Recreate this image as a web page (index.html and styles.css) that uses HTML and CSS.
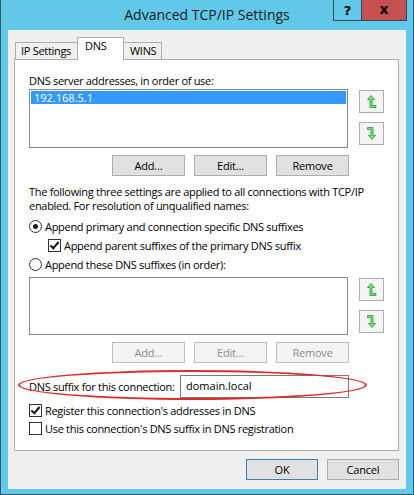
FILE: index.html
```html
<!DOCTYPE html>
<html lang="en">

<head>
    <meta charset="UTF-8">
    <meta name="viewport" content="width=device-width, initial-scale=1.0">
    <title>Advanced TCP/IP Settings</title>
    <link rel="stylesheet" href="styles.css">
</head>

<body>
    <div class="window">
        <div class="titlebar">
            <span class="title">Advanced TCP/IP Settings</span>
            <div class="caption-btns">
                <div class="cap help">?</div>
                <div class="cap close">x</div>
            </div>
        </div>

        <div class="client">
            <div class="tabs">
                <div class="tab first">IP Settings</div>
                <div class="tab active">DNS</div>
                <div class="tab">WINS</div>
            </div>

            <div class="panel">
                <div class="label">DNS server addresses, in order of use:</div>
                <div class="list-row">
                    <div class="listbox">
                        <div class="item selected">192.168.5.1</div>
                    </div>
                    <div class="arrows">
                        <div class="arrow-btn">
                            <svg width="10" height="14" viewBox="0 0 10 14">
                                <path d="M4 0.5 L0.5 4.5 L3 4.5 L3 12.5 L9 12.5 L9 10.5 L5 10.5 L5 4.5 L7.5 4.5 Z" fill="#7be07b" stroke="#3fae3f" stroke-width="1" />
                            </svg>
                        </div>
                        <div class="arrow-btn">
                            <svg width="10" height="14" viewBox="0 0 10 14">
                                <path d="M0.5 0.5 L6 0.5 L6 8.5 L8.5 8.5 L5 12.5 L1.5 8.5 L4 8.5 L4 2.5 L0.5 2.5 Z" fill="#7be07b" stroke="#3fae3f" stroke-width="1" />
                            </svg>
                        </div>
                    </div>
                </div>
                <div class="btn-row">
                    <button class="btn">Add...</button>
                    <button class="btn">Edit...</button>
                    <button class="btn">Remove</button>
                </div>

                <p class="info">The following three settings are applied to all connections with TCP/IP<br>enabled. For resolution of unqualified names:</p>

                <div class="option"><span class="radio checked"></span>Append primary and connection specific DNS suffixes</div>
                <div class="option sub"><span class="check checked"></span>Append parent suffixes of the primary DNS suffix</div>
                <div class="option"><span class="radio"></span>Append these DNS suffixes (in order):</div>

                <div class="list-row second">
                    <div class="listbox"></div>
                    <div class="arrows">
                        <div class="arrow-btn">
                            <svg width="10" height="14" viewBox="0 0 10 14">
                                <path d="M4 0.5 L0.5 4.5 L3 4.5 L3 12.5 L9 12.5 L9 10.5 L5 10.5 L5 4.5 L7.5 4.5 Z" fill="#7be07b" stroke="#3fae3f" stroke-width="1" />
                            </svg>
                        </div>
                        <div class="arrow-btn">
                            <svg width="10" height="14" viewBox="0 0 10 14">
                                <path d="M0.5 0.5 L6 0.5 L6 8.5 L8.5 8.5 L5 12.5 L1.5 8.5 L4 8.5 L4 2.5 L0.5 2.5 Z" fill="#7be07b" stroke="#3fae3f" stroke-width="1" />
                            </svg>
                        </div>
                    </div>
                </div>
                <div class="btn-row">
                    <button class="btn" disabled>Add...</button>
                    <button class="btn" disabled>Edit...</button>
                    <button class="btn" disabled>Remove</button>
                </div>

                <div class="suffix-row">
                    <span class="suffix-label">DNS suffix for this connection:</span>
                    <div class="textbox">domain.local</div>
                    <div class="highlight"></div>
                </div>

                <div class="option reg"><span class="check checked"></span>Register this connection's addresses in DNS</div>
                <div class="option reg"><span class="check"></span>Use this connection's DNS suffix in DNS registration</div>
            </div>

            <div class="footer">
                <button class="btn default">OK</button>
                <button class="btn">Cancel</button>
            </div>
        </div>
    </div>
</body>

</html>
```

FILE: styles.css
```css
body {
    margin: 0;
    padding: 0;
    font-family: "Open Sans", "Noto Sans", sans-serif;
    font-size: 11px;
    letter-spacing: -0.3px;
    color: #000;
    background: #fff;
    white-space: nowrap;
}

.window {
    width: 414px;
    height: 495px;
    box-sizing: border-box;
    background: #62c8ea;
    border: 1px solid #2e5869;
    border-top: none;
    display: flex;
    flex-direction: column;
    position: relative;
}

.titlebar {
    height: 30px;
    display: flex;
    align-items: center;
    justify-content: center;
    position: relative;
}

.title {
    font-size: 14px;
    letter-spacing: 0;
    color: #1b1b1b;
    margin-top: -1px;
}

.caption-btns {
    position: absolute;
    top: 0;
    right: 6px;
    display: flex;
}

.cap {
    height: 21px;
    box-sizing: border-box;
    border: 1px solid #2b4d5c;
    border-top: none;
    display: flex;
    align-items: center;
    justify-content: center;
    font-weight: bold;
    font-family: "DejaVu Sans", sans-serif;
    letter-spacing: 0;
}

.help {
    width: 29px;
    font-size: 13px;
}

.close {
    width: 46px;
    margin-left: -1px;
    background: #c75050;
    font-size: 14px;
    padding-bottom: 3px;
}

.client {
    flex: 1;
    margin: 0 7px 5px 7px;
    background: #f0f0f0;
    display: flex;
    flex-direction: column;
    padding: 7px 7px 0 6px;
}

.tabs {
    display: flex;
    align-items: flex-end;
    padding-left: 2px;
    height: 22px;
    position: relative;
    z-index: 1;
}

.tab {
    height: 17px;
    box-sizing: border-box;
    border: 1px solid #acacac;
    border-bottom: none;
    background: #f0f0f0;
    padding: 0 5px;
    line-height: 16px;
    margin-left: -1px;
}

.tab.first {
    margin-left: -1px;
    width: 64px;
    padding: 0 0 0 5px;
}

.tab.active {
    height: 23px;
    width: 47px;
    background: #fff;
    margin: 0 -2px 0 -2px;
    padding: 0 0 0 7px;
    line-height: 16px;
    position: relative;
    z-index: 2;
    margin-bottom: -1px;
}

.tab.active + .tab {
    width: 41px;
    padding: 0 0 0 8px;
}

.panel {
    height: 392px;
    box-sizing: border-box;
    background: #fff;
    border: 1px solid #acacac;
    padding: 0 14px;
}

.label {
    margin-top: 13px;
    line-height: 15px;
}

.list-row {
    display: flex;
    margin-top: 1px;
}

.list-row.second {
    margin-top: 3px;
}

.listbox {
    width: 320px;
    height: 59px;
    box-sizing: border-box;
    border: 1px solid #828790;
    padding: 1px;
}

.list-row.second .listbox {
    height: 58px;
}

.item {
    height: 13px;
    line-height: 13px;
    padding-left: 3px;
    letter-spacing: 0;
}

.item.selected {
    background: #3399ff;
    color: #fff;
}

.arrows {
    display: flex;
    flex-direction: column;
    gap: 9px;
    margin: 1px 0 0 11px;
}

.arrow-btn {
    width: 25px;
    height: 23px;
    box-sizing: border-box;
    border: 1px solid #adadad;
    background: #f4f4f4;
    display: flex;
    align-items: center;
    justify-content: center;
}

.btn-row {
    display: flex;
    justify-content: flex-end;
    gap: 9px;
    width: 320px;
    margin-top: 7px;
}

.btn {
    width: 73px;
    height: 21px;
    box-sizing: border-box;
    border: 1px solid #adadad;
    background: #e1e1e1;
    font-family: inherit;
    font-size: 11px;
    letter-spacing: -0.2px;
    color: #000;
    padding: 0;
    margin: 0;
}

.btn:disabled {
    background: #f4f4f4;
    border-color: #bfbfbf;
    color: #8d8d8d;
}

.info {
    margin: 9px 0 4px 0;
    line-height: 14px;
}

.option {
    height: 19px;
    display: flex;
    align-items: center;
}

.option.sub {
    padding-left: 19px;
}

.option.reg {
    height: 18px;
}

.radio {
    width: 13px;
    height: 13px;
    box-sizing: border-box;
    border: 1px solid #333;
    border-radius: 50%;
    background: #fff;
    margin-right: 3px;
    display: flex;
    align-items: center;
    justify-content: center;
}

.radio.checked::after {
    content: "";
    width: 5px;
    height: 5px;
    border-radius: 50%;
    background: #1a1a1a;
}

.check {
    width: 13px;
    height: 13px;
    box-sizing: border-box;
    border: 1px solid #333;
    background: #fff;
    margin-right: 3px;
    position: relative;
}

.check.checked::after {
    content: "";
    position: absolute;
    left: 3px;
    top: 0px;
    width: 3px;
    height: 7px;
    border: solid #111;
    border-width: 0 2px 2px 0;
    transform: rotate(40deg);
}

.suffix-row {
    margin-top: 12px;
    display: flex;
    align-items: center;
    position: relative;
    height: 23px;
    margin-bottom: 3px;
}

.suffix-label {
    width: 151px;
}

.textbox {
    width: 169px;
    height: 23px;
    box-sizing: border-box;
    border: 1px solid #7a7a7a;
    padding: 2px 5px;
    line-height: 16px;
    letter-spacing: 0;
}

.highlight {
    position: absolute;
    left: -11px;
    top: -5px;
    width: 349px;
    height: 30px;
    box-sizing: border-box;
    border: 2px solid #e12a2a;
    border-radius: 50%;
}

.footer {
    display: flex;
    justify-content: flex-end;
    gap: 9px;
    margin-top: 8px;
}

.footer .btn {
    width: 72px;
    height: 21px;
}

.btn.default {
    border-color: #3c7fb1;
}
```
